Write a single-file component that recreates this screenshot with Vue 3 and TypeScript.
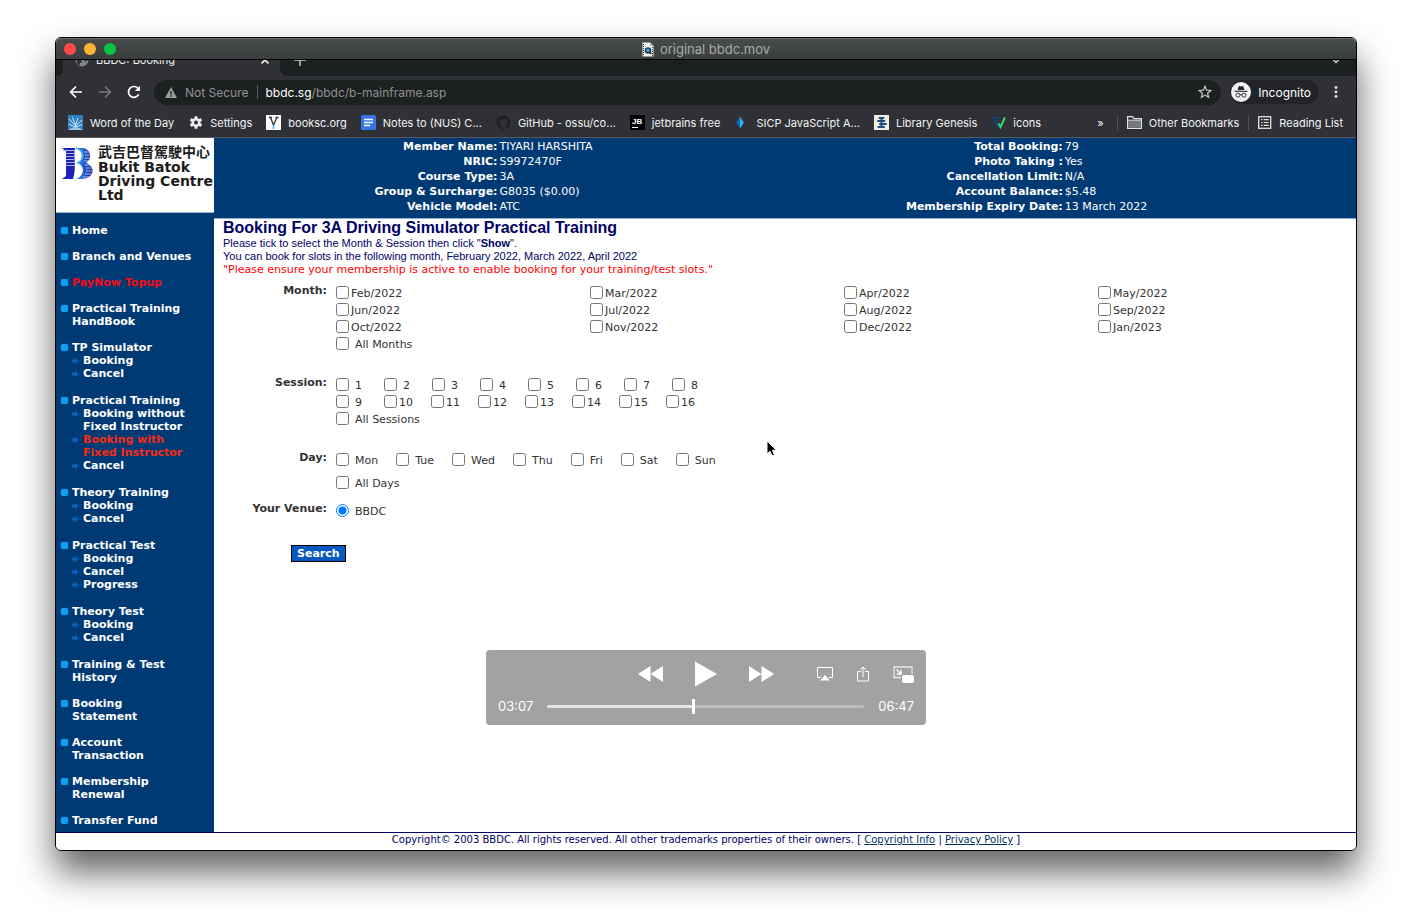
<script setup lang="ts">
import { computed, ref } from 'vue'

interface SubItem { label: string; active?: boolean }
interface NavItem { label: string; alert?: boolean; children?: SubItem[] }
interface Bookmark { icon: string; label: string }

const bookmarks: Bookmark[] = [
  { icon: 'word', label: 'Word of the Day' },
  { icon: 'gear', label: 'Settings' },
  { icon: 'booksc', label: 'booksc.org' },
  { icon: 'docs', label: 'Notes to (NUS) C...' },
  { icon: 'github', label: 'GitHub - ossu/co...' },
  { icon: 'jb', label: 'jetbrains free' },
  { icon: 'sicp', label: 'SICP JavaScript A...' },
  { icon: 'libgen', label: 'Library Genesis' },
  { icon: 'check', label: 'icons' },
]

const nav: NavItem[] = [
  { label: 'Home' },
  { label: 'Branch and Venues' },
  { label: 'PayNow Topup', alert: true },
  { label: 'Practical Training\nHandBook' },
  { label: 'TP Simulator', children: [{ label: 'Booking' }, { label: 'Cancel' }] },
  {
    label: 'Practical Training',
    children: [
      { label: 'Booking without\nFixed Instructor' },
      { label: 'Booking with\nFixed Instructor', active: true },
      { label: 'Cancel' },
    ],
  },
  { label: 'Theory Training', children: [{ label: 'Booking' }, { label: 'Cancel' }] },
  { label: 'Practical Test', children: [{ label: 'Booking' }, { label: 'Cancel' }, { label: 'Progress' }] },
  { label: 'Theory Test', children: [{ label: 'Booking' }, { label: 'Cancel' }] },
  { label: 'Training & Test\nHistory' },
  { label: 'Booking\nStatement' },
  { label: 'Account\nTransaction' },
  { label: 'Membership\nRenewal' },
  { label: 'Transfer Fund' },
]

const member: string[][] = [
  ['Member Name:', 'TIYARI HARSHITA', 'Total Booking:', '79'],
  ['NRIC:', 'S9972470F', 'Photo Taking :', 'Yes'],
  ['Course Type:', '3A', 'Cancellation Limit:', 'N/A'],
  ['Group & Surcharge:', 'G8035 ($0.00)', 'Account Balance:', '$5.48'],
  ['Vehicle Model:', 'ATC', 'Membership Expiry Date:', '13 March 2022'],
]

const months = [
  'Feb/2022', 'Mar/2022', 'Apr/2022', 'May/2022',
  'Jun/2022', 'Jul/2022', 'Aug/2022', 'Sep/2022',
  'Oct/2022', 'Nov/2022', 'Dec/2022', 'Jan/2023',
]
const sessionRows = [
  [1, 2, 3, 4, 5, 6, 7, 8],
  [9, 10, 11, 12, 13, 14, 15, 16],
]
const days = ['Mon', 'Tue', 'Wed', 'Thu', 'Fri', 'Sat', 'Sun']
const venue = ref('BBDC')

const duration = 407
const position = ref(187)
const played = computed(() => ({ '--played': `${(position.value / duration) * 100}%` }))
const clock = (s: number) =>
  `${String(Math.floor(s / 60)).padStart(2, '0')}:${String(s % 60).padStart(2, '0')}`
</script>

<template>
  <div class="desktop">
  <div class="window">
    <div class="titlebar">
      <div class="lights">
        <button class="light red" aria-label="Close"></button>
        <button class="light amber" aria-label="Minimise"></button>
        <button class="light green" aria-label="Zoom"></button>
      </div>
      <div class="title">
        <svg width="12" height="15" viewBox="0 0 12 15">
          <path d="M0.5 0.5h7.5l3.5 3.5v10.500h-11z" fill="#f2f2f2" />
          <path d="M8 0.500v3.500h3.500z" fill="#b9b9b9" />
          <path d="M1.500 2v12M10.500 5v9" stroke="#333" stroke-width="1" stroke-dasharray="1 1" />
          <circle cx="6" cy="8.500" r="3.300" fill="#26384f" />
          <circle cx="6" cy="8.300" r="1.700" fill="#2fa6e8" />
          <path d="M7.500 10l2 2" stroke="#222" stroke-width="1.500" />
        </svg>
        <span>original bbdc.mov</span>
      </div>
    </div>

    <div class="tabstrip">
      <div class="strip-start"></div>
      <div class="tab">
        <svg width="14" height="14" viewBox="0 0 14 14">
          <circle cx="7" cy="7" r="6.500" fill="#82868b" />
          <path d="M2 5l4 1 1 3-2 1v2.500C3 12 1 9.500 2 5zM8 1l4 2 1 4-3 2-1.500-3z" fill="#303136" />
        </svg>
        <span class="tab-name">BBDC: Booking</span>
        <button class="plain" aria-label="Close tab">
          <svg width="10" height="10" viewBox="0 0 10 10"><path d="M1.500 1.500l7 7M8.500 1.500l-7 7" stroke="#fff" stroke-width="1.500" /></svg>
        </button>
      </div>
      <div class="strip-rest">
        <button class="plain" aria-label="New tab">
          <svg width="12" height="12" viewBox="0 0 12 12"><path d="M6 0v12M0 6h12" stroke="#c4c6c9" stroke-width="1.500" /></svg>
        </button>
        <button class="plain" aria-label="Search tabs">
          <svg width="8" height="8" viewBox="0 0 8 8"><path d="M1 3.500l3 3 3-3" fill="none" stroke="#c4c6c9" stroke-width="1.500" /></svg>
        </button>
      </div>
    </div>

    <div class="toolbar">
      <button class="plain" aria-label="Back">
        <svg width="14" height="14" viewBox="0 0 14 14"><path d="M13 7H2M7 1.500L1.500 7L7 12.500" fill="none" stroke="#fff" stroke-width="1.600" /></svg>
      </button>
      <button class="plain" aria-label="Forward">
        <svg width="14" height="14" viewBox="0 0 14 14"><path d="M1 7h11M7 1.500L12.500 7L7 12.500" fill="none" stroke="#77797d" stroke-width="1.500" /></svg>
      </button>
      <button class="plain" aria-label="Reload">
        <svg width="14" height="14" viewBox="0 0 14 14"><path d="M11.700 9.300A5.400 5.400 0 1 1 11.300 3.800" fill="none" stroke="#fff" stroke-width="1.700" /><path d="M13 0.800v5.200H7.800z" fill="#fff" /></svg>
      </button>
      <div class="omnibox">
        <svg width="12" height="11" viewBox="0 0 12 11"><path d="M6 0l6 11H0z" fill="#9a9c9f" /><path d="M6 4v3.500M6 8.300v1.400" stroke="#1d2020" stroke-width="1.300" /></svg>
        <span class="insecure">Not Secure</span>
        <span class="bar"></span>
        <span class="url"><b>bbdc.sg</b>/bbdc/b-mainframe.asp</span>
        <button class="plain star" aria-label="Bookmark this page">
          <svg width="14" height="14" viewBox="0 0 14 14"><path d="M7 1.300l1.600 3.900 4.200.300-3.200 2.700 1 4.100L7 10.100l-3.600 2.200 1-4.100-3.200-2.700 4.200-.300z" fill="none" stroke="#c8cacc" stroke-width="1.200" /></svg>
        </button>
      </div>
      <div class="incognito">
        <svg width="20" height="20" viewBox="0 0 20 20">
          <circle cx="10" cy="10" r="10" fill="#f1f3f4" />
          <path d="M6.600 8l1-3.500 1-.500 1.400.500 1.400-.500 1 .500 1 3.500z" fill="#26272b" />
          <path d="M3.500 9.300h13" stroke="#26272b" stroke-width="1.100" />
          <g fill="none" stroke="#26272b" stroke-width="0.900"><circle cx="7" cy="13.200" r="2" /><circle cx="13" cy="13.200" r="2" /><path d="M9 12.900q1-.700 2 0" /></g>
        </svg>
        <span>Incognito</span>
      </div>
      <button class="plain" aria-label="Menu">
        <svg width="4" height="14" viewBox="0 0 4 14" fill="#e2e3e5"><circle cx="2" cy="2.500" r="1.400" /><circle cx="2" cy="7" r="1.400" /><circle cx="2" cy="11.500" r="1.400" /></svg>
      </button>
    </div>

    <nav class="bookmarks" aria-label="Bookmarks">
      <a v-for="b in bookmarks" :key="b.label" href="#" class="bookmark">
        <svg width="15" height="15" viewBox="0 0 15 15">
          <template v-if="b.icon === 'word'">
            <rect width="15" height="15" fill="#2f7fc1" />
            <path d="M7.500 15V10M7.500 11L1 4M7.500 10L4.500 2.500M7.500 10L10 3M7.500 11L14 5M7 12L0.500 9M8 12L14 9.500" fill="none" stroke="#d5e8f5" stroke-width="1" />
            <path d="M0 15q5-3 7.500-3t7.500 3z" fill="#9dc7e6" />
          </template>
          <template v-else-if="b.icon === 'gear'">
            <g transform="translate(8 7.500)" stroke="#e8eaed">
              <path d="M0-6.200V6.200M-5.400-3.100L5.400 3.100M-5.400 3.100L5.400-3.100" stroke-width="3" />
              <circle r="3.200" fill="none" stroke-width="2.600" />
              <circle r="2" fill="#303136" stroke="none" />
            </g>
          </template>
          <template v-else-if="b.icon === 'booksc'">
            <rect width="15" height="15" fill="#fff" />
            <path d="M3 2.500h3M9.500 2.500h3M4.500 2.500l3 7.500 3.500-7.500" fill="none" stroke="#333" stroke-width="1.300" />
            <path d="M7.500 10v4" stroke="#3bb1e5" stroke-width="1.600" />
          </template>
          <template v-else-if="b.icon === 'docs'">
            <rect width="15" height="15" rx="1.500" fill="#3578e5" />
            <path d="M3 4.500h9M3 7.500h9M3 10.500h6" stroke="#fff" stroke-width="1.600" />
          </template>
          <template v-else-if="b.icon === 'github'">
            <circle cx="7.500" cy="7.500" r="7" fill="#1d2023" />
            <path d="M5.500 14.500v-2.500q-2 .500-2.800-1.200M5.500 12q.100-1 .700-1.500C3 10 2.800 7 4.200 5.300L4.200 3.500l1.800.900q1.500-.400 3 0l1.800-.900v1.800C12.200 7 12 10 8.800 10.500q.700.500.700 1.500v2.500z" fill="#303136" stroke="#303136" stroke-width=".500" />
          </template>
          <template v-else-if="b.icon === 'jb'">
            <rect width="15" height="15" fill="#000" />
            <text x="2" y="9" font-family="Liberation Sans" font-size="8" font-weight="700" fill="#fff">JB</text>
            <path d="M2 12.500h6" stroke="#fff" stroke-width="1" />
          </template>
          <template v-else-if="b.icon === 'sicp'">
            <path d="M6 1.500L2 7.500l4 6z" fill="#1263ae" />
            <path d="M6 1.500l4 6-4 6z" fill="#33a7ea" />
            <path d="M6.500 5l2 3-2.500 4z" fill="#19c8ff" />
          </template>
          <template v-else-if="b.icon === 'libgen'">
            <rect width="15" height="15" fill="#f0efe2" />
            <path d="M5.500 3h4M4 6h6.500M6 9h6M4.500 12h5.500" stroke="#1d4a80" stroke-width="2" stroke-linecap="round" />
            <path d="M7.500 2v11" stroke="#1d4a80" stroke-width="2" />
          </template>
          <template v-else>
            <path d="M0 2h10L8.500 4H3.500l1.500 2.500h3L6.500 9 8 12l.500 2H7z" fill="#1b3f6e" />
            <path d="M14 2.500L9.500 12 7.500 8.500" fill="none" stroke="#35d67a" stroke-width="2" />
          </template>
        </svg>
        <span>{{ b.label }}</span>
      </a>
      <div class="bookmarks-end">
        <button class="plain more" aria-label="More bookmarks">»</button>
        <span class="divider"></span>
        <a href="#" class="bookmark">
          <svg width="15" height="13" viewBox="0 0 15 13"><path d="M.600 12.400V.600h5l1.500 2h7.300v9.800z" fill="#303136" stroke="#e2e3e5" stroke-width="1.200" /><path d="M1.200 4.700h12.600v7H1.200z" fill="#77797d" /><path d="M.600 4.200h13.800" stroke="#e2e3e5" stroke-width="1" /></svg>
          <span>Other Bookmarks</span>
        </a>
        <span class="divider"></span>
        <a href="#" class="bookmark">
          <svg width="14" height="13" viewBox="0 0 14 13"><rect x=".700" y=".700" width="12" height="11.600" fill="none" stroke="#e2e3e5" stroke-width="1.300" /><path d="M3 3.700h1.500M3 6.500h1.500M3 9.300h1.500M5.700 3.700h5M5.700 6.500h5M5.700 9.300h5" stroke="#e2e3e5" stroke-width="1.200" /></svg>
          <span>Reading List</span>
        </a>
      </div>
    </nav>

    <div class="page">
      <aside class="side">
        <div class="brand">
          <svg width="33" height="34" viewBox="0 0 33 34">
            <defs>
              <linearGradient id="bowl" x1="0" x2="1">
                <stop offset="0" stop-color="#2aa9f5" />
                <stop offset=".5" stop-color="#2558cc" />
                <stop offset="1" stop-color="#14219c" />
              </linearGradient>
            </defs>
            <path d="M0 1H13C11 9 15 20 11 32H0L4 29V4z" fill="#1b22b4" />
            <path d="M1 3.500h12M3 6.500h9M4 9.500h8M4 12.500h8M4 15.500h9M4 18.500h9" stroke="#a9b2e8" stroke-width="1" />
            <path d="M14 1h6c9 0 11 11 4 15 10 3 9 16-5 16h-5c9-3 9-14 1-16 7-3 6-13-1-15z" fill="url(#bowl)" />
            <path d="M22 5h7M23 8h7M23 11h7M22 14h6M23 18h8M24 21h8M24 24h8M23 27h8M21 30h7" stroke="#fff" stroke-width=".900" opacity=".700" />
            <path d="M14 1c9 3 9 12 1 15" fill="none" stroke="#39b5f8" stroke-width="1.500" />
          </svg>
          <div class="brand-text">
            <span class="brand-cjk">武吉巴督駕駛中心</span>
            <span>Bukit Batok</span>
            <span>Driving Centre</span>
            <span>Ltd</span>
          </div>
        </div>
        <ul class="menu">
          <li v-for="(item, i) in nav" :key="i" class="group">
            <a href="#" class="menu-link" :class="{ alert: item.alert }">
              <span class="bullet"></span><span>{{ item.label }}</span>
            </a>
            <ul v-if="item.children" class="sub">
              <li v-for="c in item.children" :key="c.label">
                <a href="#" class="sub-link" :class="{ active: c.active }">
                  <svg width="7" height="13" viewBox="0 0 7 13"><path d="M0 5.500h3V3.500L6.500 7 3 10.500v-2H0z" fill="#0a5fc4" /></svg>
                  <span>{{ c.label }}</span>
                </a>
              </li>
            </ul>
          </li>
        </ul>
      </aside>

      <div class="content">
        <table class="member">
          <colgroup><col class="c1" /><col class="c2" /><col class="c3" /><col /></colgroup>
          <tbody>
            <tr v-for="row in member" :key="row[0]">
              <th scope="row">{{ row[0] }}</th>
              <td>{{ row[1] }}</td>
              <th scope="row">{{ row[2] }}</th>
              <td>{{ row[3] }}</td>
            </tr>
          </tbody>
        </table>

        <main class="main">
          <h1>Booking For 3A Driving Simulator Practical Training</h1>
          <p>Please tick to select the Month &amp; Session then click "<b>Show</b>".</p>
          <p>You can book for slots in the following month, February 2022, March 2022, April 2022</p>
          <p class="warning">"Please ensure your membership is active to enable booking for your training/test slots."</p>

          <form class="form" @submit.prevent>
            <div class="row" role="group" aria-labelledby="l-month">
              <span id="l-month" class="name">Month:</span>
              <div>
                <div class="months">
                  <label v-for="m in months" :key="m" class="opt near"><input type="checkbox" /><span>{{ m }}</span></label>
                </div>
                <label class="opt"><input type="checkbox" /><span>All Months</span></label>
              </div>
            </div>
            <div class="row" role="group" aria-labelledby="l-session">
              <span id="l-session" class="name">Session:</span>
              <div>
                <div v-for="(r, i) in sessionRows" :key="i" class="sessions">
                  <label v-for="s in r" :key="s" class="opt" :class="{ near: s > 9, single: s < 10 }"><input type="checkbox" /><span>{{ s }}</span></label>
                </div>
                <label class="opt"><input type="checkbox" /><span>All Sessions</span></label>
              </div>
            </div>
            <div class="row" role="group" aria-labelledby="l-day">
              <span id="l-day" class="name">Day:</span>
              <div class="day-rows">
                <div class="days">
                  <label v-for="d in days" :key="d" class="opt"><input type="checkbox" /><span>{{ d }}</span></label>
                </div>
                <label class="opt"><input type="checkbox" /><span>All Days</span></label>
              </div>
            </div>
            <div class="row venue" role="group" aria-labelledby="l-venue">
              <span id="l-venue" class="name">Your Venue:</span>
              <label class="opt"><input v-model="venue" type="radio" name="venue" value="BBDC" /><span>BBDC</span></label>
            </div>
            <button class="search" type="submit">Search</button>
          </form>
        </main>
      </div>
    </div>

    <footer class="footer">
      Copyright© 2003 BBDC. All rights reserved. All other trademarks properties of their owners. [
      <a href="#">Copyright Info</a> | <a href="#">Privacy Policy</a> ]
    </footer>

    <svg class="pointer" width="14" height="20" viewBox="0 0 14 20">
      <path d="M1 1v13l3-2.800 2 4.600 2.400-1-2-4.500H10.500z" fill="#000" stroke="#fff" stroke-width="1" />
    </svg>

    <div class="player">
      <div class="controls">
        <div class="transport">
          <button class="plain" aria-label="Rewind"><svg width="25" height="16" viewBox="0 0 25 16" fill="#fff"><path d="M12.500 0v16L0 8zM25 0v16L12.500 8z" /></svg></button>
          <button class="plain" aria-label="Play"><svg width="22" height="26" viewBox="0 0 22 26" fill="#fff"><path d="M0 0.500L22 13 0 25.500z" /></svg></button>
          <button class="plain" aria-label="Fast forward"><svg width="25" height="16" viewBox="0 0 25 16" fill="#fff"><path d="M0 0l12.500 8L0 16zM12.500 0L25 8 12.500 16z" /></svg></button>
        </div>
        <div class="extras">
          <button class="plain" aria-label="AirPlay"><svg width="16" height="14" viewBox="0 0 16 14"><path d="M4 10.500H.500V.500h15v10H12" fill="none" stroke="#fff" /><path d="M8 8l5 5.500H3z" fill="#fff" /></svg></button>
          <button class="plain" aria-label="Share"><svg width="12" height="16" viewBox="0 0 12 16"><path d="M4 5.500H.500v9.500h11V5.500H8M6 11V1M3 3.800L6 1l3 2.800" fill="none" stroke="#fff" /></svg></button>
          <button class="plain" aria-label="Picture in picture"><svg width="21" height="17" viewBox="0 0 21 17"><path d="M8 11.500H1V1h18v7" fill="none" stroke="#e9e9e9" stroke-width="1.300" /><path d="M3.500 3.500l4 4M8 3.800V8H3.800" fill="none" stroke="#fff" stroke-width="1.300" /><rect x="9" y="9" width="12" height="8" rx="2" fill="#fff" /></svg></button>
        </div>
      </div>
      <div class="timeline">
        <span>{{ clock(position) }}</span>
        <input v-model.number="position" type="range" min="0" :max="duration" :style="played" aria-label="Playback position" />
        <span>06:47</span>
      </div>
    </div>
  </div>
  </div>
</template>

<style>
body {
  margin: 0;
  background: #fff;
}
</style>

<style scoped>
* {
  box-sizing: border-box;
}
.desktop {
  display: flex;
  min-height: 100vh;
  padding: 37px 55px 73px;
  background: #fff;
}
.window {
  position: relative;
  display: flex;
  flex: 1;
  flex-direction: column;
  min-width: 0;
  border: 1px solid #000;
  border-radius: 6px;
  background: #fff;
  box-shadow: 0 21px 36px rgba(0, 0, 0, 0.62);
  font-family: "DejaVu Sans", Verdana, sans-serif;
  font-size: 11px;
}
.plain {
  display: inline-flex;
  padding: 0;
  border: 0;
  background: none;
  color: inherit;
  font: inherit;
}
a {
  color: inherit;
  text-decoration: none;
}
svg {
  flex: none;
}
.titlebar,
.tabstrip,
.toolbar,
.bookmarks {
  font-family: Inter, Roboto, sans-serif;
}
.titlebar {
  display: grid;
  grid-template-columns: 1fr auto 1fr;
  align-items: center;
  height: 22px;
  padding: 0 8px;
  border-bottom: 1px solid #000;
  border-top: 1px solid #6a6c6b;
  border-radius: 5px 5px 0 0;
  background: linear-gradient(#474b49, #3a3e3c);
}
.lights {
  display: flex;
  gap: 8px;
}
.light {
  width: 12px;
  height: 12px;
  padding: 0;
  border: 0;
  border-radius: 50%;
}
.red { background: #fe4b47; }
.amber { background: #fdb437; }
.green { background: #0ac43f; }
.title {
  display: flex;
  align-items: center;
  gap: 6px;
  color: #a9abaa;
  font-size: 13px;
}
.tabstrip {
  display: flex;
  align-items: flex-end;
  height: 16px;
  overflow: hidden;
  background: #303136;
}
.strip-start {
  width: 7px;
  height: 16px;
  border-radius: 0 0 6px 0;
  background: #1d2020;
}
.tab {
  display: flex;
  align-items: center;
  width: 217px;
  height: 32px;
  padding: 0 10px 0 12px;
  gap: 7px;
  color: #f1f3f4;
  font-size: 11px;
}
.tab-name {
  flex: 1;
}
.strip-rest {
  display: flex;
  align-items: center;
  justify-content: space-between;
  flex: 1;
  height: 32px;
  padding: 0 16px 0 14px;
  border-radius: 0 0 0 8px;
  background: #1d2020;
}
.toolbar {
  display: flex;
  align-items: center;
  gap: 15px;
  height: 32px;
  padding: 0 18px 0 13px;
  background: #303136;
}
.omnibox {
  display: flex;
  align-items: center;
  flex: 1;
  gap: 8px;
  height: 25px;
  margin-left: -2px;
  padding: 0 9px 0 11px;
  border-radius: 13px;
  background: #1d2020;
  color: #8f9193;
  font-size: 12px;
}
.bar {
  width: 1px;
  height: 14px;
  background: #55585a;
}
.url b {
  color: #fff;
  font-weight: 400;
}
.star {
  margin-left: auto;
}
.incognito {
  display: flex;
  align-items: center;
  gap: 7px;
  height: 24px;
  margin-left: -6px;
  padding: 0 8px 0 1px;
  border-radius: 12px;
  background: #222327;
  color: #fff;
  font-size: 12px;
}
.bookmarks {
  display: flex;
  align-items: center;
  gap: 14px;
  height: 30px;
  padding: 0 13px 0 12px;
  border-bottom: 1px solid #56585c;
  background: #303136;
  color: #f1f3f4;
  font-size: 11px;
  white-space: nowrap;
}
.bookmark {
  display: flex;
  align-items: center;
  gap: 7px;
}
.bookmarks-end {
  display: flex;
  align-items: center;
  gap: 9px;
  margin-left: auto;
}
.more {
  margin-right: 4px;
}
.divider {
  width: 1px;
  height: 14px;
  background: #515357;
}
.page {
  display: flex;
  flex: 1;
}
.side {
  width: 158px;
  flex: none;
  background: #003a75;
}
.brand {
  display: flex;
  gap: 3px;
  height: 75px;
  padding: 7px 0 0 6px;
  border-bottom: 1px solid #9fb8d0;
  background: #fff;
}
.brand svg {
  margin-top: 2px;
}
.brand-text {
  display: flex;
  flex-direction: column;
  color: #1c1c1c;
  font-size: 14px;
  font-weight: 700;
  line-height: 14px;
  white-space: nowrap;
}
.brand-cjk {
  height: 15px;
  font-family: "Noto Sans CJK TC", sans-serif;
  line-height: 12px;
}
.menu,
.sub {
  margin: 0;
  padding: 0;
  list-style: none;
}
.menu {
  display: flex;
  flex-direction: column;
  gap: 13px;
  padding: 11px 0 4px 5px;
  color: #fff;
  font-weight: 700;
  line-height: 13px;
  white-space: pre-line;
}
.menu-link,
.sub-link {
  display: flex;
  gap: 4px;
}
.bullet {
  flex: none;
  width: 7px;
  height: 7px;
  margin: 3px 0 0;
  border-radius: 2px;
  background: #0d9ff0;
  box-shadow: 0 0 1px #0d9ff0;
}
.sub {
  padding: 0 0 1px 11px;
}
.alert { color: #f50a14; }
.active { color: #f52b14; }
.content {
  display: flex;
  flex: 1;
  flex-direction: column;
  min-width: 0;
}
.member {
  width: 100%;
  height: 81px;
  padding: 1px 0 4px;
  border-bottom: 1px solid #8fb0d0;
  border-spacing: 0;
  table-layout: fixed;
  background: #003a75;
  color: #fff;
  line-height: 15px;
}
.c1 { width: 25%; }
.c2 { width: 25%; }
.c3 { width: 24.5%; }
.member th,
.member td {
  height: 15px;
  padding: 0;
  text-align: left;
  white-space: nowrap;
}
.member th {
  padding-right: 2px;
  text-align: right;
}
.main {
  padding: 0 4px 0 9px;
}
h1,
p {
  margin: 0;
  color: #000066;
  font-family: "Liberation Sans", Arial, sans-serif;
}
h1 {
  font-size: 16px;
  line-height: 18px;
}
p {
  font-size: 11px;
  line-height: 13px;
}
.warning {
  color: #f00;
  font-family: "DejaVu Sans", Verdana, sans-serif;
}
.form {
  display: flex;
  flex-direction: column;
  gap: 24px;
  margin-top: 8px;
  color: #333;
}
.row {
  display: grid;
  grid-template-columns: 104px 1fr;
  gap: 9px;
}
.name {
  font-weight: 700;
  line-height: 13px;
  text-align: right;
}
.opt {
  display: flex;
  align-items: center;
  gap: 6px;
  height: 17px;
}
.opt span {
  padding-top: 2px;
  line-height: 15px;
}
.opt input {
  width: 13px;
  height: 13px;
  margin: 0;
}
.near {
  gap: 2px;
}
.months {
  display: grid;
  grid-template-columns: repeat(4, 1fr);
}
.sessions {
  display: flex;
}
.sessions .opt {
  width: 47px;
}
.sessions .single {
  width: 48px;
}
.days {
  display: flex;
  gap: 18px;
}
.day-rows {
  display: flex;
  flex-direction: column;
  gap: 6px;
}
.venue {
  margin-top: -13px;
}
.search {
  align-self: flex-start;
  height: 17px;
  margin: 2px 0 0 68px;
  padding: 0 5px;
  border: 1px solid #000;
  background: #0759c0;
  color: #fff;
  font-family: inherit;
  font-size: 11px;
  font-weight: 700;
  line-height: 15px;
}
.footer {
  height: 18px;
  border-top: 1px solid #000066;
  border-radius: 0 0 5px 5px;
  background: #fff;
  color: #000066;
  font-size: 10px;
  line-height: 14px;
  text-align: center;
}
.footer a {
  color: #003366;
  text-decoration: underline;
}
.pointer {
  position: absolute;
  left: 710px;
  top: 402px;
}
.player {
  position: absolute;
  bottom: 125px;
  left: 50%;
  width: 440px;
  height: 75px;
  padding: 11px 12px 8px;
  transform: translateX(-50%);
  border-radius: 4px;
  background: #a2a2a2;
  color: #fff;
  font-family: Inter, Roboto, sans-serif;
  font-size: 13px;
}
.controls {
  display: grid;
  grid-template-columns: 1fr auto 1fr;
  align-items: center;
}
.transport {
  display: flex;
  grid-column: 2;
  align-items: center;
  gap: 32px;
}
.extras {
  display: flex;
  align-items: center;
  justify-content: flex-end;
  gap: 24px;
}
.timeline {
  display: flex;
  align-items: center;
  gap: 14px;
  margin-top: 11px;
  line-height: 16px;
}
.timeline input {
  flex: 1;
  min-width: 0;
  height: 15px;
  margin: 0;
  appearance: none;
  background: none;
}
.timeline input::-webkit-slider-runnable-track {
  height: 3px;
  border-radius: 2px;
  background: linear-gradient(to right, #e4e4e4 var(--played), #bcbcbc var(--played));
}
.timeline input::-webkit-slider-thumb {
  width: 3px;
  height: 15px;
  margin-top: -6px;
  appearance: none;
  background: #fff;
}
</style>
